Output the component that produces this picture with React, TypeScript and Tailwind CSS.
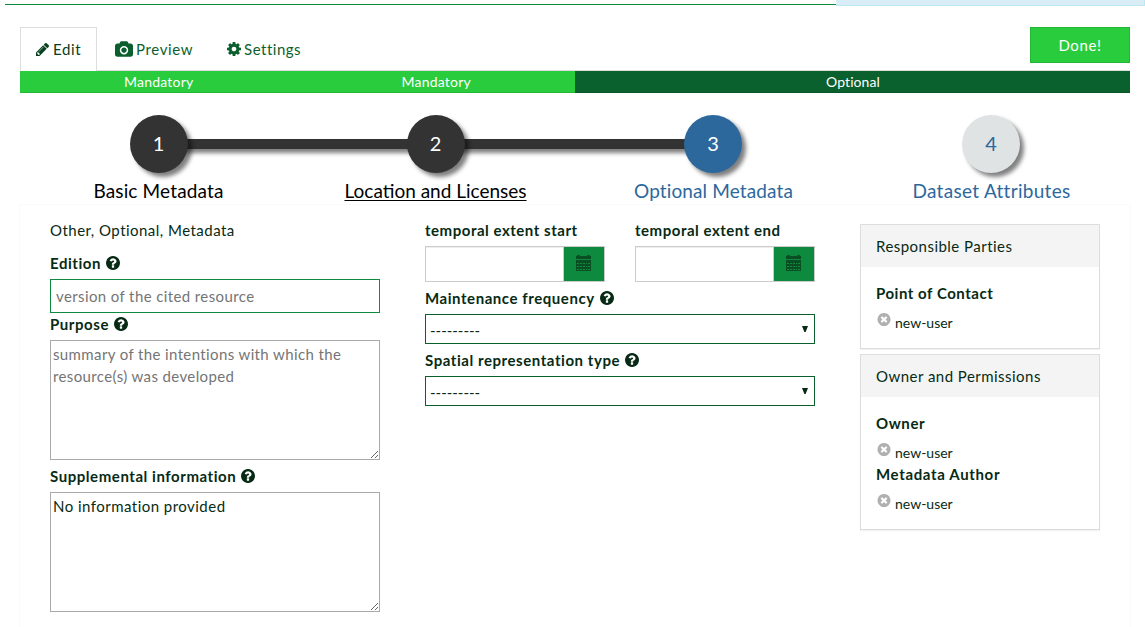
import React from "react";

const CIRCLE =
  "M1664 896q0 209-103 385.5t-279.5 279.5-385.5 103-385.5-103-279.5-279.5-103-385.5 103-385.5 279.5-279.5 385.5-103 385.5 103 279.5 279.5 103 385.5z";
const QUESTION =
  "M1024 1376v-192q0-14-9-23t-23-9h-192q-14 0-23 9t-9 23v192q0 14 9 23t23 9h192q14 0 23-9t9-23zM1280 704q0-88-55.5-163t-138.5-116-170-41q-243 0-371 213-15 24 8 42l132 100q7 6 19 6 16 0 25-12 53-68 86-92 34-24 86-24 48 0 85.5 26t37.5 59q0 38-20 61t-68 45q-63 28-115.5 86.5t-52.5 125.5v36q0 14 9 23t23 9h192q14 0 23-9t9-23q0-19 21.5-49.5t54.5-49.5q32-18 49-28.5t46-35 44.5-48 28-60.5 12.5-81z";
const TIMES =
  "M1277 1122q0-26-19-45l-181-181 181-181q19-19 19-45 0-27-19-46l-90-90q-19-19-46-19-26 0-45 19l-181 181-181-181q-19-19-45-19-27 0-46 19l-90 90q-19 19-19 46 0 26 19 45l181 181-181 181q-19 19-19 45 0 27 19 46l90 90q19 19 46 19 26 0 45-19l181-181 181 181q19 19 45 19 27 0 46-19l90-90q19-19 19-46z";
const PENCIL =
  "M491 1536l91-91-235-235-91 91v107h128v128h107zM1014 608q0-22-22-22-10 0-17 7l-542 542q-7 7-7 17 0 22 22 22 10 0 17-7l542-542q7-7 7-17zM960 416l416 416-832 832h-416v-416zM1643 512q0 53-37 90l-166 166-416-416 166-165q36-38 90-38 53 0 91 38l235 234q37 39 37 91z";
const CAMERA =
  "M960 672q119 0 203.5 84.5t84.5 203.5-84.5 203.5-203.5 84.5-203.5-84.5-84.5-203.5 84.5-203.5 203.5-84.5zM1664 256q106 0 181 75t75 181v896q0 106-75 181t-181 75h-1408q-106 0-181-75t-75-181v-896q0-106 75-181t181-75h224l51-136q19-49 69.5-84.5t103.5-35.5h512q53 0 103.5 35.5t69.5 84.5l51 136h224zM960 1408q185 0 316.5-131.5t131.5-316.5-131.5-316.5-316.5-131.5-316.5 131.5-131.5 316.5 131.5 316.5 316.5 131.5z";
const COG =
  "M1152 896q0-106-75-181t-181-75-181 75-75 181 75 181 181 75 181-75 75-181zM1664 787v222q0 12-8 23t-20 13l-185 28q-19 54-39 91 35 50 107 138 10 12 10 25t-9 23q-27 37-99 108t-94 71q-12 0-26-9l-138-108q-44 23-91 38-16 136-29 186-7 28-36 28h-222q-14 0-24.5-8.5t-11.5-21.5l-28-184q-49-16-90-37l-141 107q-10 9-25 9-14 0-25-11-126-114-165-168-7-10-7-23 0-12 8-23 15-21 51-66.5t54-70.5q-27-50-41-99l-183-27q-13-2-21-12.5t-8-23.5v-222q0-12 8-23t19-13l186-28q14-46 39-92-40-57-107-138-10-12-10-24 0-10 9-23 26-36 98.5-107.5t94.5-71.5q13 0 26 10l138 107q44-23 91-38 16-136 29-186 7-28 36-28h222q14 0 24.5 8.5t11.5 21.5l28 184q49 16 90 37l142-107q9-9 24-9 13 0 25 10 129 119 165 170 7 8 7 22 0 12-8 23-15 21-51 66.5t-54 70.5q26 50 41 98l183 28q13 2 21 12.5t8 23.5z";

function HelpLabel({ text, className = "" }: { text: string; className?: string }) {
  return (
    <div className={`flex items-center font-bold tracking-[0.56px] ${className}`}>
      <span>{text}</span>
      <svg viewBox="128 128 1536 1536" className="ml-[5px] size-[14px] fill-current">
        <path d={QUESTION + CIRCLE} />
      </svg>
    </div>
  );
}

const steps = [
  { n: "1", label: "Basic Metadata", width: "w-[278px]", circle: "bg-[#333333] text-white pr-[1px]", text: "pr-[1px] text-black tracking-[0.15px]", line: true },
  { n: "2", label: "Location and Licenses", width: "w-[276px]", circle: "bg-[#333333] text-white pr-[1px]", text: "pr-[1px] text-black underline decoration-1 underline-offset-[2px]", line: true },
  { n: "3", label: "Optional Metadata", width: "w-[278px]", circle: "bg-[#2c689c] text-white", text: "pl-[1px] text-[#2c689c] tracking-[0.12px]", line: false },
  { n: "4", label: "Dataset Attributes", width: "w-[278px]", circle: "bg-[#dfe3e4] text-[#2c689c]", text: "pl-[1px] text-[#2c689c] tracking-[0.3px]", line: false },
];

function Step({ step }: { step: (typeof steps)[number] }) {
  return (
    <div className={`relative flex flex-col items-center pt-[22px] ${step.width}`}>
      {step.line && (
        <div className="absolute left-[139px] top-[46px] h-[10px] w-[277px] bg-[#333333] shadow-[4px_4px_4px_rgba(0,0,0,0.5)]" />
      )}
      <div
        className={`relative z-10 flex size-[58px] shrink-0 items-center justify-center rounded-full pb-[2px] text-[20px] shadow-[4px_4px_4px_rgba(0,0,0,0.5)] ${step.circle}`}
      >
        {step.n}
      </div>
      <div className={`mt-[4px] text-[19px] leading-[28px] ${step.text}`}>{step.label}</div>
    </div>
  );
}

function DateField({ label }: { label: string }) {
  return (
    <div className="w-[180px]">
      <div className="h-[27px] font-bold leading-[22px] tracking-[0.53px]">{label}</div>
      <div className="flex h-[36px] border border-[#cccccc]">
        <div className="flex-1 border-r border-[#cccccc] shadow-[inset_0_1px_1px_rgba(0,0,0,0.075)]" />
        <div className="flex w-[40px] bg-[#0e8a3e] pl-[12px] pt-[8px]">
          <svg viewBox="0 0 15 16" className="h-4 w-[15px] fill-[#0a4f24]" shapeRendering="crispEdges">
            <path d="M0 1h1V0h3v1h7V0h3v1h1v3H0z" />
            <path
              fillRule="evenodd"
              d="M0 5h15v11H0zM1 8v1h2v-1zM4 8v1h2v-1zM7 8v1h2v-1zM10 8v1h1v-1zM12 8v1h2v-1zM1 11v1h2v-1zM4 11v1h2v-1zM7 11v1h2v-1zM10 11v1h1v-1zM12 11v1h2v-1zM1 14v1h2v-1zM4 14v1h2v-1zM7 14v1h2v-1zM10 14v1h1v-1zM12 14v1h2v-1z"
            />
          </svg>
        </div>
      </div>
    </div>
  );
}

function SelectBox() {
  return (
    <div className="flex h-[30px] items-center justify-between border border-[#0b5f2c] bg-white pl-[4px] pr-[6px]">
      <span className="pt-[2px] tracking-normal">---------</span>
      <svg viewBox="0 0 6 6" className="h-[6px] w-[6px] fill-[#072a14]">
        <path d="M0 0h6L3.6 6H2.4z" />
      </svg>
    </div>
  );
}

function User() {
  return (
    <div className="flex h-[29px] items-start pl-[1px] text-[14px] tracking-normal">
      <svg viewBox="128 128 1536 1536" className="mt-[9px] h-[13px] w-[14px] fill-[#b0b0b0]">
        <path d={TIMES + CIRCLE} />
      </svg>
      <span className="ml-[4px] mt-[9px] leading-[20px]">new-user</span>
    </div>
  );
}

function Card({ title, children }: { title: string; children: React.ReactNode }) {
  return (
    <section className="border border-[#dddddd] bg-white shadow-[0_1px_1px_rgba(0,0,0,0.05)]">
      <h3 className="h-[42px] bg-[#f4f4f4] px-[15px] leading-[42px]">{title}</h3>
      <div className="px-[15px] pb-[15px] pt-[15px]">{children}</div>
    </section>
  );
}

export default function App() {
  return (
    <div className="h-[627px] w-[1145px] overflow-hidden bg-white font-['Lato',sans-serif] text-[15px] leading-[22px] text-[#072a14]">
      <div className="flex h-[6px] pl-[5px]">
        <div className="h-[5px] w-[831px] border-b border-[#0e8a3e]" />
        <div className="flex-1 border-b border-r border-[#bce8f1] bg-[#d9edf7]" />
      </div>
      <div className="flex h-[65px] pl-[20px] pr-[15px] pt-[21px]">
        <nav className="flex h-[44px] flex-1 tracking-[0.62px] text-[#0b5f2c]">
          <div className="flex h-[44px] w-[77px] items-center border border-b-0 border-[#dddddd] pb-[1px] pl-[15px] text-[#074120]">
            <svg viewBox="128 149 1515 1515" className="size-[13px] fill-current">
              <path d={PENCIL} />
            </svg>
            <span className="ml-[4px]">Edit</span>
          </div>
          <div className="flex flex-1 items-center border-b border-[#dddddd] pl-[18px]">
            <svg viewBox="0 0 1920 1664" className="h-[16px] w-[18px] fill-current">
              <path d={CAMERA} />
            </svg>
            <span className="ml-[3px]">Preview</span>
            <svg viewBox="128 128 1536 1536" className="ml-[34px] size-[14px] fill-current">
              <path d={COG} />
            </svg>
            <span className="ml-[3px] tracking-[0.5px]">Settings</span>
          </div>
        </nav>
        <div className="flex w-[100px] flex-col border-b border-[#dddddd]">
          <button className="h-[36px] border border-[#24b636] bg-[#28cc3c] tracking-[0.6px] text-white">Done!</button>
        </div>
      </div>
      <div className="ml-[20px] mr-[15px] flex h-[22px] text-center text-[14px] leading-[22px] tracking-[0.2px] text-white">
        <div className="w-[277.5px] border-b border-[#24b636] bg-[#28cc3c]">Mandatory</div>
        <div className="w-[277.5px] border-b border-[#24b636] bg-[#28cc3c]">Mandatory</div>
        <div className="flex-1 border-b border-[#0a5527] bg-[#0b612d] pl-[1px] tracking-[0.1px]">Optional</div>
      </div>
      <div className="ml-[20px] flex h-[111px]">
        {steps.map((s) => (
          <Step key={s.n} step={s} />
        ))}
      </div>
      <main className="ml-[19px] mr-[14px] flex h-[430px] border border-[#fafafa] px-[30px] tracking-[0.47px]">
        <div className="w-[330px] pt-[14px]">
          <div>Other, Optional, Metadata</div>
          <HelpLabel text="Edition" className="mt-[11px]" />
          <input
            placeholder="version of the cited resource"
            className="mt-[5px] block h-[34px] w-full rounded-none border border-[#0e8a3e] px-[5px] pb-[1px] tracking-[0.39px] placeholder:text-[#757575]"
          />
          <HelpLabel text="Purpose" />
          <textarea
            placeholder="summary of the intentions with which the resource(s) was developed"
            className="mt-[5px] block h-[120px] w-full border border-[#a9a9a9] px-[2px] py-[2px] tracking-[0.38px] placeholder:text-[#757575]"
          />
          <HelpLabel text="Supplemental information" className="mt-[5px]" />
          <textarea
            defaultValue="No information provided"
            className="mt-[5px] block h-[120px] w-full border border-[#a9a9a9] px-[2px] py-[2px] tracking-[0.47px]"
          />
        </div>
        <div className="ml-[45px] w-[390px] pt-[14px]">
          <div className="flex gap-[30px]">
            <DateField label="temporal extent start" />
            <DateField label="temporal extent end" />
          </div>
          <HelpLabel text="Maintenance frequency" className="mb-[5px] mt-[5px]" />
          <SelectBox />
          <HelpLabel text="Spatial representation type" className="mb-[5px] mt-[5px]" />
          <SelectBox />
        </div>
        <div className="ml-[45px] flex w-[240px] flex-col gap-[5px] pt-[19px]">
          <Card title="Responsible Parties">
            <div className="font-bold tracking-[0.53px]">Point of Contact</div>
            <User />
          </Card>
          <Card title="Owner and Permissions">
            <div className="font-bold tracking-[0.6px]">Owner</div>
            <User />
            <div className="font-bold tracking-[0.65px]">Metadata Author</div>
            <User />
          </Card>
        </div>
      </main>
    </div>
  );
}
